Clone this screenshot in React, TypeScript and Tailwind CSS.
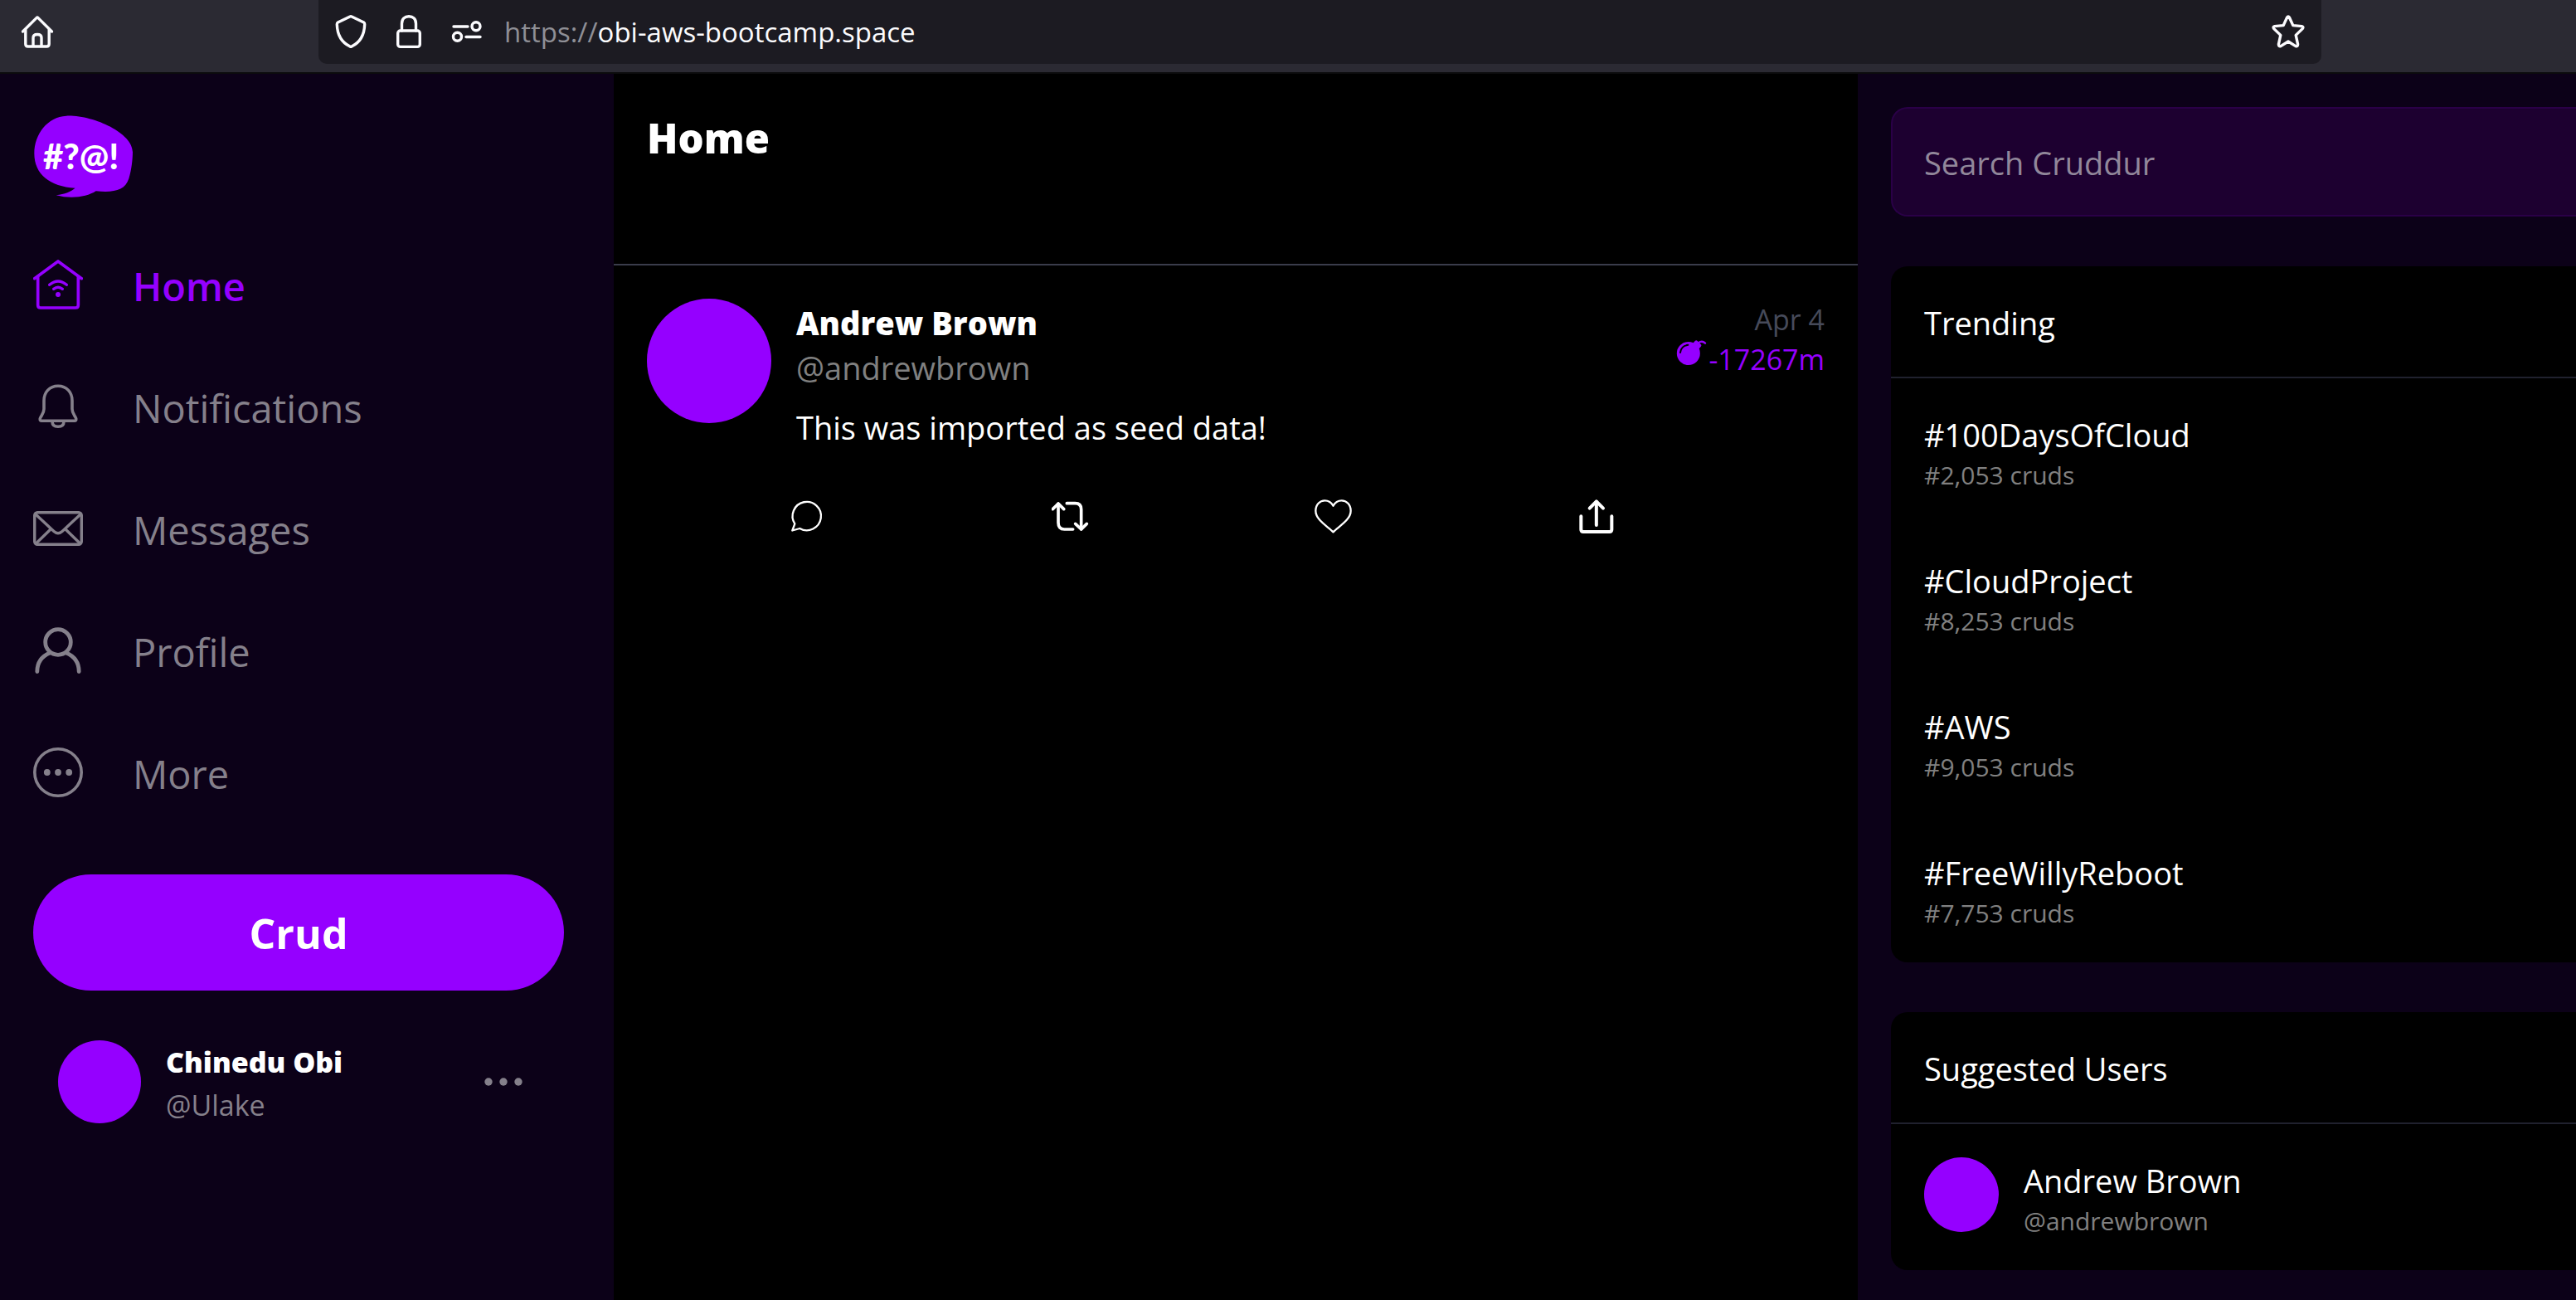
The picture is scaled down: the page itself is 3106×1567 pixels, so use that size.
import type { ReactNode } from "react";

const strokeProps = {
  fill: "none",
  stroke: "currentColor",
  strokeLinecap: "round" as const,
  strokeLinejoin: "round" as const,
};

function BrowserHomeIcon() {
  return (
    <svg viewBox="0 0 44 44" className="size-11" strokeWidth="3.4" {...strokeProps}>
      <path d="M4.5 22 L21 5.6 Q22 4.6 23 5.6 L39.5 22" />
      <path d="M7.8 20 V37 Q7.8 40 10.8 40 H33.2 Q36.2 40 36.2 37 V20" />
      <path d="M17 39 V29.5 Q17 25.5 22 25.5 Q27 25.5 27 29.5 V39" />
    </svg>
  );
}

function ShieldIcon() {
  return (
    <svg viewBox="0 0 40 44" className="h-11 w-10" strokeWidth="3.4" {...strokeProps}>
      <path d="M19 4 Q20 3.4 21 4 L35.6 11 Q36.8 11.8 36.7 13.4 C36.3 26.5 31.5 35 21 40 Q20 40.6 19 40 C8.5 35 3.7 26.5 3.3 13.4 Q3.2 11.8 4.4 11 Z" />
    </svg>
  );
}

function LockIcon() {
  return (
    <svg viewBox="0 0 34 44" className="h-11 w-[34px]" strokeWidth="3.4" {...strokeProps}>
      <rect x="3.7" y="21" width="26.6" height="19.4" rx="3" />
      <path d="M8.5 21 V12.5 C8.5 7 12 3.7 17 3.7 S25.5 7 25.5 12.5 V21" />
    </svg>
  );
}

function PermissionsIcon() {
  return (
    <svg viewBox="0 0 40 30" className="h-[30px] w-10" strokeWidth="3.4" {...strokeProps}>
      <path d="M4 9 H21" />
      <circle cx="31" cy="8.7" r="5" />
      <circle cx="8.5" cy="21.3" r="5" />
      <path d="M19 21.5 H36" />
    </svg>
  );
}

function StarIcon() {
  return (
    <svg viewBox="0 0 44 44" className="size-11" strokeWidth="3.4" {...strokeProps}>
      <path d="M20.6 5 Q22 3 23.4 5 L27.8 14.6 L38.4 15.6 Q41 16.4 39.2 18.6 L31.2 26.4 L33.6 37.4 Q33.5 40.4 31 39.6 L22 34 L13 39.6 Q10.5 40.4 10.4 37.4 L12.8 26.4 L4.8 18.6 Q3 16.4 5.6 15.6 L16.2 14.6 Z" />
    </svg>
  );
}

function Logo() {
  return (
    <svg viewBox="120 114 360 303" className="h-[101px] w-[120px]" role="img" aria-label="Cruddur">
      <path
        fill="#9500ff"
        d="M240 119 C335 115 480 180 480 250 C480 275 476 315 466 346 C452 390 410 397 347 391 C315 412 258 421 203 406 C235 402 256 393 272 380 C180 375 124 330 124 255 C124 185 172 122 240 119 Z"
      />
      <text
        x="293"
        y="312"
        textAnchor="middle"
        fill="#fff"
        fontFamily="Lato, sans-serif"
        fontWeight="900"
        fontSize="126"
      >
        #?@!
      </text>
    </svg>
  );
}

function HomeIcon() {
  return (
    <svg viewBox="120 639 180 180" className="size-[60px]" strokeWidth="11" {...strokeProps}>
      <path d="M125 707 L210 645 L295 707" />
      <path d="M137 700 V803 Q137 813 147 813 H273 Q283 813 283 803 V700" />
      <path d="M179 730 Q210 704 241 730" strokeWidth="10" />
      <path d="M194 745 Q210 732 226 745" strokeWidth="10" />
      <circle cx="210" cy="765" r="9" fill="currentColor" stroke="none" />
    </svg>
  );
}

function BellIcon() {
  return (
    <svg viewBox="0 0 60 60" className="size-[60px]" strokeWidth="3.6" {...strokeProps}>
      <path d="M30 5.3 C19.5 5.3 13 13 13 23 V33 C13 38.5 9.5 41 8.3 44.5 Q7.8 47.3 10.3 47.3 H49.7 Q52.2 47.3 51.7 44.5 C50.5 41 47 38.5 47 33 V23 C47 13 40.5 5.3 30 5.3 Z" />
      <path d="M23 48 C23 52.5 26 54.3 30 54.3 S37 52.5 37 48" />
    </svg>
  );
}

function EnvelopeIcon() {
  return (
    <svg viewBox="0 0 60 60" className="size-[60px]" strokeWidth="3.4" {...strokeProps}>
      <rect x="1.7" y="10.7" width="56.6" height="38.6" rx="3.5" />
      <path d="M3 13 L25 33.5 Q30 38 35 33.5 L57 13" />
      <path d="M4 47.5 L21 31" />
      <path d="M56 47.5 L39 31" />
    </svg>
  );
}

function PersonIcon() {
  return (
    <svg viewBox="0 0 60 60" className="size-[60px]" strokeWidth="4.8" {...strokeProps}>
      <circle cx="30" cy="20" r="15.3" />
      <path d="M20 33 C9.5 37.5 4.8 46 4.8 55.5" />
      <path d="M40 33 C50.5 37.5 55.2 46 55.2 55.5" />
    </svg>
  );
}

function MoreIcon() {
  return (
    <svg viewBox="0 0 60 60" className="size-[60px]">
      <circle cx="30" cy="30" r="28.2" fill="none" stroke="currentColor" strokeWidth="3.6" />
      <g fill="currentColor">
        <circle cx="16.8" cy="30" r="3.9" />
        <circle cx="30" cy="30" r="3.9" />
        <circle cx="43.2" cy="30" r="3.9" />
      </g>
    </svg>
  );
}

function DotsIcon() {
  return (
    <svg viewBox="0 0 46 10" className="h-2.5 w-[46px]" fill="currentColor">
      <circle cx="5" cy="5" r="4.7" />
      <circle cx="23" cy="5" r="4.7" />
      <circle cx="41" cy="5" r="4.7" />
    </svg>
  );
}

function BombIcon() {
  return (
    <svg viewBox="1320 207 111 96" className="h-8 w-[37px]">
      <circle cx="1364.5" cy="258" r="42" fill="currentColor" />
      <path
        fill="currentColor"
        d="M1380 222 L1389 212 Q1393 209 1397 213 L1410 226 Q1413 230 1409 234 L1400 244 Z"
      />
      <path d="M1400 220 Q1414 210 1425 221" fill="none" stroke="currentColor" strokeWidth="7" strokeLinecap="round" />
      <path d="M1335 255 Q1338 231 1363 227.5" fill="none" stroke="#000" strokeWidth="6" strokeLinecap="round" />
    </svg>
  );
}

function ReplyIcon() {
  return (
    <svg viewBox="30 60 135 135" className="size-[45px]" strokeWidth="7" {...strokeProps}>
      <path d="M55 154 A51.5 51.5 0 1 1 73 171 L46 178.5 Z" />
    </svg>
  );
}

function RepostIcon() {
  return (
    <svg viewBox="983 60 135 135" className="size-[45px]" strokeWidth="11" {...strokeProps}>
      <path d="M1007 82 V150 Q1007 174 1029 174 H1060" />
      <path d="M987 101 L1007 81 L1027 101" />
      <path d="M1038 80 H1068 Q1090 80 1090 102 V173" />
      <path d="M1069 154 L1090 174 L1110 154" />
    </svg>
  );
}

function HeartIcon() {
  return (
    <svg viewBox="15 780 135 135" className="size-[45px]" strokeWidth="7" {...strokeProps}>
      <path d="M82.5 904 C62 883 19 860 19 827 C19 805 34 790 52 790 C66 790 76 797 82.5 809 C89 797 99 790 113 790 C131 790 146 805 146 827 C146 860 103 883 82.5 904 Z" />
    </svg>
  );
}

function ShareIcon() {
  return (
    <svg viewBox="968 780 135 135" className="size-[45px]" strokeWidth="12" {...strokeProps}>
      <path d="M978 847 V895 Q978 903 986 903 H1081 Q1089 903 1089 895 V847" />
      <path d="M1033.5 879 V795" />
      <path d="M1009 818 L1033.5 793 L1058 818" />
    </svg>
  );
}

const navItems: { label: string; icon: ReactNode; active?: boolean }[] = [
  { label: "Home", icon: <HomeIcon />, active: true },
  { label: "Notifications", icon: <BellIcon /> },
  { label: "Messages", icon: <EnvelopeIcon /> },
  { label: "Profile", icon: <PersonIcon /> },
  { label: "More", icon: <MoreIcon /> },
];

const trends = [
  { tag: "#100DaysOfCloud", count: "#2,053 cruds" },
  { tag: "#CloudProject", count: "#8,253 cruds" },
  { tag: "#AWS", count: "#9,053 cruds" },
  { tag: "#FreeWillyReboot", count: "#7,753 cruds" },
];

const actions = [
  { label: "Reply", icon: <ReplyIcon /> },
  { label: "Repost", icon: <RepostIcon /> },
  { label: "Like", icon: <HeartIcon /> },
  { label: "Share", icon: <ShareIcon /> },
];

function BrowserBar() {
  return (
    <header className="flex h-[89px] items-start border-b-2 border-[#0c0c0d] bg-[#2b2a33] text-[#fbfbfe]">
      <div className="flex h-[77px] w-[384px] shrink-0 items-center pb-0.5 pl-[23px]">
        <button aria-label="Home page">
          <BrowserHomeIcon />
        </button>
      </div>
      <div className="flex h-[77px] flex-1 items-center rounded-b-[10px] bg-[#1c1b22] pr-[18px] pb-0.5 pl-[19px]">
        <button aria-label="Tracking protection">
          <ShieldIcon />
        </button>
        <button aria-label="Site security" className="ml-[33px]">
          <LockIcon />
        </button>
        <button aria-label="Permissions" className="ml-[33px]">
          <PermissionsIcon />
        </button>
        <p className="ml-[25px] flex-1 pt-0.5 text-[33px] leading-[44px]">
          <span className="text-[#8f8f96]">https://</span>obi-aws-bootcamp.space
        </p>
        <button aria-label="Bookmark this page">
          <StarIcon />
        </button>
      </div>
      <div className="w-[307px] shrink-0" />
    </header>
  );
}

function Sidebar() {
  return (
    <div className="w-[740px] shrink-0 pt-[49px] pr-[60px] pl-10">
      <a href="#" className="block w-[120px]">
        <Logo />
      </a>
      <nav className="mt-[74px] flex flex-col gap-[87px] text-[47px] leading-[56px]">
        {navItems.map((item) => (
          <a
            key={item.label}
            href="#"
            className={
              item.active
                ? "flex items-center gap-[60px] font-semibold text-[#9500ff]"
                : "flex items-center gap-[60px] text-[#85808b]"
            }
          >
            {item.icon}
            <span className="pt-1">{item.label}</span>
          </a>
        ))}
      </nav>
      <button className="mt-[93px] h-[140px] w-full rounded-full bg-[#9500ff] pt-0.5 text-[50px] font-bold text-white">
        Crud
      </button>
      <div className="mt-[60px] flex items-start px-[30px]">
        <div className="size-[100px] shrink-0 rounded-full bg-[#9500ff]" />
        <div className="ml-[30px] flex-1 text-[34px] leading-[52px]">
          <p className="font-extrabold text-white">Chinedu Obi</p>
          <p className="text-[#85808b]">@Ulake</p>
        </div>
        <button aria-label="Account options" className="mr-5 flex h-[100px] items-center text-[#85808b]">
          <DotsIcon />
        </button>
      </div>
    </div>
  );
}

function Feed() {
  return (
    <main className="w-[1500px] shrink-0 bg-black">
      <div className="border-b-2 border-[#3a3c4b] px-10 pt-[41px] pb-[116px]">
        <h1 className="text-[49px] leading-[72px] font-extrabold text-white">Home</h1>
      </div>
      <article className="p-10">
        <div className="flex items-start">
          <div className="size-[150px] shrink-0 rounded-full bg-[#9500ff]" />
          <div className="ml-[30px] flex-1 pt-0.5 text-[38px] leading-[54px]">
            <p className="font-extrabold text-white">Andrew Brown</p>
            <p className="text-[#808080]">@andrewbrown</p>
            <p className="mt-[18px] text-white">This was imported as seed data!</p>
          </div>
          <div className="flex flex-col items-end pt-px text-[34px] leading-[48px]">
            <time className="text-[#464a5a]">Apr 4</time>
            <div className="flex items-start gap-0.5 text-[#9500ff]">
              <BombIcon />
              <span>-17267m</span>
            </div>
          </div>
        </div>
        <div className="mt-[58px] ml-[150px] grid grid-cols-4">
          {actions.map((action) => (
            <div key={action.label} className="flex pl-5">
              <button aria-label={action.label} className="text-white">
                {action.icon}
              </button>
            </div>
          ))}
        </div>
      </article>
    </main>
  );
}

function Card({ title, children }: { title: string; children: ReactNode }) {
  return (
    <section className="mt-[60px] rounded-l-[20px] bg-black">
      <h2 className="border-b-2 border-[#20212e] px-10 pt-[41px] pb-[38px] text-[38px] leading-[54px] text-white">
        {title}
      </h2>
      {children}
    </section>
  );
}

function NamePair({ name, detail }: { name: string; detail: string }) {
  return (
    <div>
      <p className="text-[38px] leading-[56px] text-white">{name}</p>
      <p className="text-[30px] leading-[42px] text-[#808080]">{detail}</p>
    </div>
  );
}

function RightRail() {
  return (
    <aside className="min-w-0 flex-1 pt-10 pl-10">
      <input
        type="search"
        aria-label="Search Cruddur"
        placeholder="Search Cruddur"
        className="block h-[132px] w-full rounded-l-[20px] border-2 border-r-0 border-[#2a0047] bg-[#1d0030] px-[38px] pt-0.5 text-[38px] text-white placeholder:text-[#91879a]"
      />
      <Card title="Trending">
        {trends.map((trend) => (
          <a key={trend.tag} href="#" className="block px-10 pt-10 pb-[38px]">
            <NamePair name={trend.tag} detail={trend.count} />
          </a>
        ))}
      </Card>
      <Card title="Suggested Users">
        <a href="#" className="flex items-start px-10 pt-10 pb-[38px]">
          <div className="mr-[30px] size-[90px] shrink-0 rounded-full bg-[#9500ff]" />
          <NamePair name="Andrew Brown" detail="@andrewbrown" />
        </a>
      </Card>
    </aside>
  );
}

export default function App() {
  return (
    <div className="flex min-h-screen flex-col bg-[#0c0118] font-['Open_Sans',sans-serif]">
      <BrowserBar />
      <div className="flex flex-1">
        <Sidebar />
        <Feed />
        <RightRail />
      </div>
    </div>
  );
}
